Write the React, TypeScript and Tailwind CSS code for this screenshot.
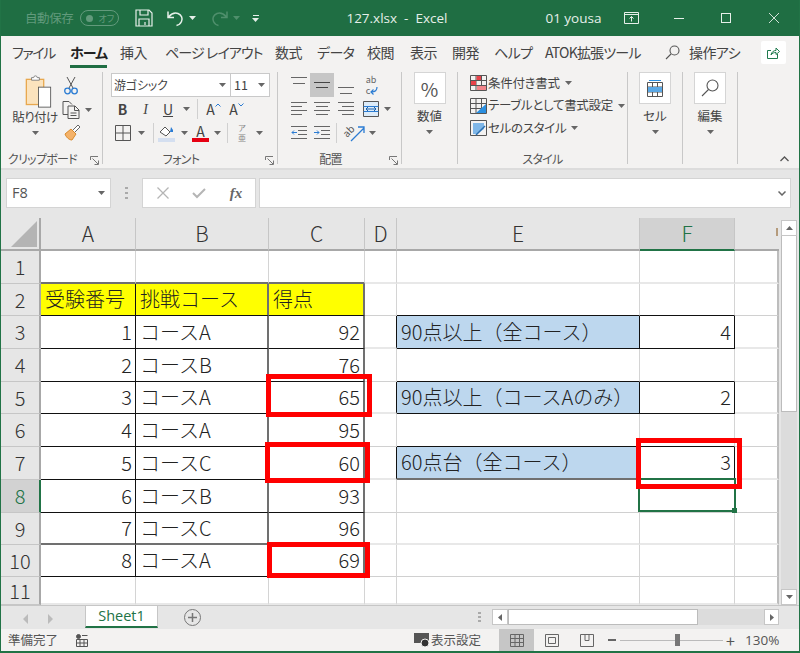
import type { ReactNode } from "react";

const colWidths = [95, 133, 96, 32, 243, 95, 44];
const rowHeights = [33, 32, 33, 33, 32, 33, 33, 33, 32, 32, 28];
const colNames = ["A", "B", "C", "D", "E", "F", ""];

type Cell = { text: string; right?: boolean; fill?: string };

// row number -> column index -> cell
const cells: Record<number, Record<number, Cell>> = {
  2: {
    0: { text: "受験番号", fill: "bg-[#ffff00]" },
    1: { text: "挑戦コース", fill: "bg-[#ffff00]" },
    2: { text: "得点", fill: "bg-[#ffff00]" },
  },
  3: {
    0: { text: "1", right: true },
    1: { text: "コースA" },
    2: { text: "92", right: true },
    4: { text: "90点以上（全コース）", fill: "bg-[#bdd7ee]" },
    5: { text: "4", right: true },
  },
  4: { 0: { text: "2", right: true }, 1: { text: "コースB" }, 2: { text: "76", right: true } },
  5: {
    0: { text: "3", right: true },
    1: { text: "コースA" },
    2: { text: "65", right: true },
    4: { text: "90点以上（コースAのみ）", fill: "bg-[#bdd7ee]" },
    5: { text: "2", right: true },
  },
  6: { 0: { text: "4", right: true }, 1: { text: "コースA" }, 2: { text: "95", right: true } },
  7: {
    0: { text: "5", right: true },
    1: { text: "コースC" },
    2: { text: "60", right: true },
    4: { text: "60点台（全コース）", fill: "bg-[#bdd7ee]" },
    5: { text: "3", right: true },
  },
  8: { 0: { text: "6", right: true }, 1: { text: "コースB" }, 2: { text: "93", right: true } },
  9: { 0: { text: "7", right: true }, 1: { text: "コースC" }, 2: { text: "96", right: true } },
  10: { 0: { text: "8", right: true }, 1: { text: "コースA" }, 2: { text: "69", right: true } },
};

const isBordered = (r: number, c: number) =>
  (c <= 2 && c >= 0 && r >= 2 && r <= 10) || ((c === 4 || c === 5) && (r === 3 || r === 5 || r === 7));

// the screenshot was scaled, so gridlines alternate between thin and soft double ones
function cellBorders(n: number, c: number) {
  const edgeR = isBordered(n, c) || isBordered(n, c + 1);
  const edgeB = isBordered(n, c) || isBordered(n + 1, c);
  let right = "border-r border-r-[#d4d4d4]";
  if (c === 6) right = "border-r-2 border-r-[#bdbdbd]";
  else if (edgeR && (c === 1 || c === 2) && n >= 2 && n <= 10) right = "border-r-2 border-r-[#707070]";
  else if (edgeR) right = "border-r border-r-[#111]";
  let bottom = n % 2 === 1 ? "border-b-2 border-b-[#e8e8e8]" : "border-b border-b-[#d0d0d0]";
  if (edgeB) {
    bottom = n === 1 || n === 9 || (n === 7 && c >= 3) ? "border-b-2 border-b-[#707070]" : "border-b border-b-[#111]";
  }
  return `${right} ${bottom}`;
}

function Caret({ className = "text-[#666]" }: { className?: string }) {
  return (
    <svg width="7" height="4" viewBox="0 0 7 4" className={className}>
      <path d="M0 0h7L3.5 4z" fill="currentColor" />
    </svg>
  );
}

function Launcher() {
  return (
    <svg width="9" height="9" viewBox="0 0 9 9" className="text-[#777]">
      <path d="M.5 4V.5H8M8.5 8.5H4.5M8.5 8.5V4.5M2.5 2.5l5.5 5.5" fill="none" stroke="currentColor" />
    </svg>
  );
}

function Slot({ w, children, className = "" }: { w: string; children?: ReactNode; className?: string }) {
  return <div className={`flex h-full shrink-0 items-center justify-center ${w} ${className}`}>{children}</div>;
}

function Lines({ ys, mode = "c", color = "#666" }: { ys: number[]; mode?: "c" | "l" | "r"; color?: string }) {
  return (
    <svg width="16" height="20" viewBox="0 0 16 20">
      {ys.map((y, i) => {
        const short = mode !== "c" && i % 2 === 1;
        const inset = mode === "c" && i % 2 === 1 ? 2 : 0;
        const x1 = short && mode === "r" ? 4 : inset;
        const x2 = short && mode === "l" ? 11 : 16 - inset;
        return <path key={y} d={`M${x1} ${y}.5H${x2}`} stroke={color} />;
      })}
    </svg>
  );
}

function Group({ w, label, launcher, children }: { w: string; label: string; launcher?: boolean; children: ReactNode }) {
  return (
    <section className={`my-[4px] flex shrink-0 flex-col border-r border-[#c8c8c8] ${w}`}>
      <div className="min-h-0 flex-1">{children}</div>
      <div
        className={`relative flex h-[10px] items-center justify-center whitespace-nowrap text-[12px] leading-none tracking-[-0.7px] text-[#555] ${
          launcher ? "pr-[18px]" : ""
        }`}
      >
        {label}
        {launcher && (
          <span className="absolute right-[3px] top-[2px] flex">
            <Launcher />
          </span>
        )}
      </div>
    </section>
  );
}

function BigButton({ label, children }: { label: string; children: ReactNode }) {
  return (
    <div className="flex flex-col items-center">
      <div className="flex h-[32px] w-[32px] items-center justify-center border border-[#d5d5d5] bg-white">{children}</div>
      <div className="mt-[3px] text-[12.5px] leading-[18px] text-[#444]">{label}</div>
      <div className="mt-[5px] flex">
        <Caret />
      </div>
    </div>
  );
}

function StyleRow({ label, icon }: { label: string; icon: ReactNode }) {
  return (
    <div className="flex h-[22.5px] items-center">
      <span className="ml-[11px] flex w-[18px] justify-center">{icon}</span>
      <span className="ml-[1px] whitespace-nowrap text-[12.5px] tracking-[-0.3px] text-[#444]">{label}</span>
      <span className="ml-[5px] flex">
        <Caret />
      </span>
    </div>
  );
}

function TitleBar() {
  return (
    <header className="flex h-[36px] shrink-0 items-center bg-[#1f6e43] text-[#e6efe9]">
      <span className="ml-[24px] text-[12.5px] tracking-[-0.4px] text-[#629a7c]">自動保存</span>
      <span className="ml-[7px] flex h-[16px] w-[39px] items-center rounded-full border border-[#629a7c] pl-[5px] text-[9px] text-[#629a7c]">
        <span className="h-[7px] w-[7px] rounded-full bg-[#629a7c]" />
        <span className="ml-[5px] leading-none">オフ</span>
      </span>
      <svg width="18" height="18" viewBox="0 0 18 18" className="ml-[16px]" fill="none" stroke="#e6efe9" strokeWidth="1.2">
        <path d="M1 1h13l3 3v13H1zM5 1v5h8V1M4 17v-7h10v7M10 13v3" />
      </svg>
      <svg width="17" height="17" viewBox="0 0 17 17" className="ml-[14px]" fill="none" stroke="#e6efe9" strokeWidth="1.5">
        <path d="M1 1.500v6h6M1.500 7C5 3 8 2.500 11 3.500c3.500 1.300 5 5 3.500 8-1 2-2.500 3.500-5 4" />
      </svg>
      <span className="ml-[5px] flex">
        <Caret className="text-[#e6efe9]" />
      </span>
      <svg width="17" height="17" viewBox="0 0 17 17" className="ml-[15px]" fill="none" stroke="#4f8f6c" strokeWidth="1.5">
        <path d="M16 1.500v6h-6M15.500 7C12 3 9 2.500 6 3.500c-3.500 1.300-5 5-3.500 8 1 2 2.500 3.500 5 4" />
      </svg>
      <span className="ml-[5px] flex">
        <Caret className="text-[#4f8f6c]" />
      </span>
      <span className="ml-[12px] flex flex-col items-center gap-[2px]">
        <span className="h-px w-[6px] bg-[#e6efe9]" />
        <Caret className="text-[#e6efe9]" />
      </span>
      <span className="ml-[87px] w-[103px] shrink-0 whitespace-pre font-['Open_Sans','Noto_Sans_CJK_JP',sans-serif] text-[13.5px]">
        127.xlsx  -  Excel
      </span>
      <span className="ml-[96px] w-[54px] shrink-0 whitespace-nowrap font-['Open_Sans',sans-serif] text-[13.5px]">01 yousa</span>
      <svg width="15" height="12" viewBox="0 0 15 12" className="ml-[25px]" fill="none" stroke="#e6efe9">
        <path d="M.5.5h14v11H.5zM.5 2.500h14M7.500 9.500v-5M5.500 6.500l2-2 2 2" />
      </svg>
      <span className="ml-[35px] h-px w-[10px] bg-[#e6efe9]" />
      <span className="ml-[37px] h-[10px] w-[10px] border border-[#e6efe9]" />
      <svg width="10" height="10" viewBox="0 0 10 10" className="ml-[38px]" stroke="#e6efe9" strokeWidth="0.9">
        <path d="M0 0l10 10M10 0L0 10" />
      </svg>
    </header>
  );
}

function TabRow() {
  return (
    <nav className="flex h-[32px] shrink-0 items-center whitespace-pre text-[14px] tracking-[-0.6px] text-[#444]">
      <span className="ml-[11px] w-[38px] shrink-0 tracking-[-1.4px]">ファイル</span>
      <span className="relative ml-[20px] w-[37px] shrink-0 font-bold tracking-[-1px] text-[#222]">
        ホーム
        <span className="absolute inset-x-0 top-[23px] h-[3px] bg-[#1f6e43]" />
      </span>
      <span className="ml-[13px] w-[28px] shrink-0">挿入</span>
      <span className="ml-[17px] w-[93px] shrink-0 tracking-[-0.9px]">ページ レイアウト</span>
      <span className="ml-[17px] w-[27px] shrink-0">数式</span>
      <span className="ml-[15px] w-[34px] shrink-0">データ</span>
      <span className="ml-[16px] w-[28px] shrink-0">校閲</span>
      <span className="ml-[15px] w-[27px] shrink-0">表示</span>
      <span className="ml-[15px] w-[27px] shrink-0">開発</span>
      <span className="ml-[15px] w-[33px] shrink-0">ヘルプ</span>
      <span className="ml-[18px] w-[100px] shrink-0 tracking-[-0.8px]">ATOK拡張ツール</span>
      <svg width="15" height="15" viewBox="0 0 15 15" className="ml-[20px] shrink-0" fill="none" stroke="#555" strokeWidth="1.1">
        <circle cx="9.500" cy="5.500" r="4.500" />
        <path d="M6 9l-5 5" />
      </svg>
      <span className="ml-[9px] w-[51px] shrink-0">操作アシ</span>
      <div className="ml-[21px] flex h-[23px] w-[25px] shrink-0 items-center justify-center rounded-[2px] bg-white">
        <svg width="13" height="13" viewBox="0 0 13 13" fill="none" stroke="#1f7a4d">
          <path d="M4 4.500H.5v8h10V8M4 9c.5-3 2.500-4.500 5-4.500V2l3.500 3.500L9 8.500V6.500C7 6.500 5 7 4 9z" />
        </svg>
      </div>
    </nav>
  );
}

function Ribbon() {
  return (
    <div className="flex h-[102px] shrink-0 border-b-2 border-[#dcdcdc] bg-[#f3f2f1] text-[#444]">
      <Group w="w-[102px]" label="クリップボード" launcher>
        <div className="flex h-full">
          <div className="ml-[5px] flex w-[58px] flex-col items-center pt-[3px]">
            <svg width="27" height="33" viewBox="0 0 30 38" className="ml-[6px] shrink-0" fill="none">
              <rect x="1" y="5" width="20" height="29" fill="#fbe3bd" stroke="#e8a84f" strokeWidth="1.500" />
              <path d="M7 6V3h2.500a2 2 0 0 1 4 0H16v3z" fill="#fff" stroke="#777" />
              <rect x="15" y="14" width="14" height="23" fill="#fff" stroke="#555" />
            </svg>
            <span className="whitespace-nowrap text-[12.5px] leading-[18px] tracking-[-0.5px]">貼り付け</span>
            <span className="mt-[5px] flex">
              <Caret />
            </span>
          </div>
          <div className="flex flex-col pt-[5px]">
            <svg width="14" height="18" viewBox="0 0 14 18" fill="none">
              <path d="M3 0l6 11M11 0L5 11" stroke="#555" />
              <circle cx="3.500" cy="14" r="2.800" stroke="#2b7cd3" strokeWidth="1.300" />
              <circle cx="10.500" cy="14" r="2.800" stroke="#2b7cd3" strokeWidth="1.300" />
            </svg>
            <div className="-ml-[2px] mt-[6px] flex items-center">
              <svg width="18" height="18" viewBox="0 0 18 18" fill="none" stroke="#555">
                <path d="M6 13.500H1V.5h6l3 3M6 5h7l4 4v8.500H6zM12.500 5v4.500H17M8.500 12h6M8.500 14.500h6" />
              </svg>
              <span className="ml-[5px] flex">
                <Caret />
              </span>
            </div>
            <svg width="17" height="17" viewBox="0 0 17 17" className="mt-[5px]" fill="none">
              <path d="M1 10l6-5 5 5-4 6c-3 0-6-3-7-6z" fill="#f4b269" stroke="#d98a2b" />
              <path d="M9 6l5-5 2 2-5 5" fill="#fff" stroke="#666" />
            </svg>
          </div>
        </div>
      </Group>

      <Group w="w-[175px]" label="フォント" launcher>
        <div className="flex h-full flex-col pl-[8px] pt-[1px]">
          <div className="flex h-[24px] w-[159px] shrink-0 border border-[#c9c9c9] bg-white text-[12px]">
            <span className="flex w-[119px] items-center justify-between border-r border-[#c9c9c9] pl-[2px] pr-[4px] tracking-[-0.2px]">
              游ゴシック
              <Caret />
            </span>
            <span className="flex flex-1 items-center justify-between pl-[3px] pr-[4px] text-[12.5px]">
              11
              <Caret />
            </span>
          </div>
          <div className="flex h-[24px] shrink-0 items-center text-[14px]">
            <Slot w="w-[23px]" className="font-bold">B</Slot>
            <Slot w="w-[23px]" className="font-['Liberation_Serif',serif] italic">I</Slot>
            <Slot w="w-[22px]" className="underline">U</Slot>
            <Slot w="w-[14px]"><Caret /></Slot>
            <span className="ml-[4px] h-[20px] w-px bg-[#d0d0d0]" />
            <Slot w="w-[31px]">
              A
              <svg width="6" height="4" viewBox="0 0 6 4" className="mb-[8px]" fill="none" stroke="#2b7cd3">
                <path d="M.5 3.500L3 1l2.500 2.500" />
              </svg>
            </Slot>
            <Slot w="w-[15px]">
              A
              <svg width="6" height="4" viewBox="0 0 6 4" className="mb-[8px] shrink-0" fill="none" stroke="#2b7cd3">
                <path d="M.5.5L3 3 5.500.5" />
              </svg>
            </Slot>
          </div>
          <div className="flex h-[24px] shrink-0 items-center">
            <Slot w="w-[23px]">
              <svg width="16" height="16" viewBox="0 0 16 16" fill="none" stroke="#555">
                <path d="M.5.5h15v15H.5zM8 .5v15M.5 8h15" />
              </svg>
            </Slot>
            <Slot w="w-[14px]"><Caret /></Slot>
            <span className="ml-[5px] h-[20px] w-px bg-[#d0d0d0]" />
            <Slot w="w-[25px]">
              <svg width="17" height="18" viewBox="0 0 17 18" fill="none">
                <path d="M2 8l5-5 5 5-4 4z" fill="#fff" stroke="#555" />
                <path d="M13 3l2 3v2h-3z" fill="#2b7cd3" />
                <rect y="14" width="17" height="4" fill="#d4dff0" />
              </svg>
            </Slot>
            <Slot w="w-[10px]"><Caret /></Slot>
            <Slot w="w-[23px]">
              <div className="flex flex-col items-center text-[14px] leading-[14px]">
                A<span className="h-[4px] w-[17px] bg-[#e60012]" />
              </div>
            </Slot>
            <Slot w="w-[10px]"><Caret /></Slot>
            <span className="ml-[5px] h-[20px] w-px bg-[#d0d0d0]" />
            <Slot w="w-[28px]">
              <span className="flex flex-col items-center text-[8px] leading-[10px] text-[#888]">
                <span>ア</span>
                <span>亜</span>
              </span>
            </Slot>
            <Slot w="w-[7px]"><Caret /></Slot>
          </div>
        </div>
      </Group>

      <Group w="w-[124px]" label="配置" launcher>
        <div className="flex h-full flex-col pl-[9px] pt-[1px]">
          <div className="flex h-[24px] shrink-0">
            <Slot w="w-[23px]"><Lines ys={[2, 8]} /></Slot>
            <Slot w="w-[24px]" className="bg-[#c6c6c6]"><Lines ys={[7, 12]} color="#444" /></Slot>
            <Slot w="w-[24px]"><Lines ys={[12, 18]} /></Slot>
            <Slot w="w-[28px]">
              <span className="flex flex-col text-[9px] leading-[11px] text-[#666]">
                <span>ab</span>
                <span className="flex items-center">
                  c
                  <svg width="8" height="8" viewBox="0 0 8 8" fill="none" stroke="#2b7cd3" strokeWidth="1.200">
                    <path d="M7 0c0 4-2 5-5.500 5M3.500 2.500L1 5l2.500 2.500" />
                  </svg>
                </span>
              </span>
            </Slot>
          </div>
          <div className="flex h-[24px] shrink-0">
            <Slot w="w-[23px]"><Lines ys={[3, 7, 11, 15]} mode="l" /></Slot>
            <Slot w="w-[24px]"><Lines ys={[3, 7, 11, 15]} /></Slot>
            <Slot w="w-[24px]"><Lines ys={[3, 7, 11, 15]} mode="r" /></Slot>
            <Slot w="w-[26px]">
              <svg width="16" height="16" viewBox="0 0 16 16" fill="none">
                <path d="M.5.5h15v15H.5z" fill="#dcebf8" stroke="#555" />
                <path d="M.5 5.500h15M.5 10.500h15" stroke="#2b7cd3" />
                <path d="M3 8h10M5 6L3 8l2 2M11 6l2 2-2 2" stroke="#1a5fa8" />
              </svg>
            </Slot>
            <Slot w="w-[7px]"><Caret /></Slot>
          </div>
          <div className="flex h-[24px] shrink-0">
            <Slot w="w-[23px]">
              <svg width="16" height="14" viewBox="0 0 16 14" fill="none">
                <path d="M0 .5h16M7 4.500h9M7 8.500h9M0 12.500h16" stroke="#666" />
                <path d="M6 6.500H1M3 4.500l-2 2 2 2" stroke="#2b7cd3" />
              </svg>
            </Slot>
            <Slot w="w-[24px]">
              <svg width="16" height="14" viewBox="0 0 16 14" fill="none">
                <path d="M0 .5h16M7 4.500h9M7 8.500h9M0 12.500h16" stroke="#666" />
                <path d="M0 6.500h5M3 4.500l2 2-2 2" stroke="#2b7cd3" />
              </svg>
            </Slot>
            <span className="ml-[2px] h-[20px] w-px self-center bg-[#d0d0d0]" />
            <Slot w="w-[26px]" className="ml-[6px]">
              <svg width="24" height="20" viewBox="0 0 24 20" fill="none" className="overflow-visible">
                <text x="3" y="15" fontSize="10" fill="#555" transform="rotate(-45 3 15)">ab</text>
                <path d="M7 18L20 5M14 4h6v6" stroke="#2b7cd3" strokeWidth="1.300" />
              </svg>
            </Slot>
            <Slot w="w-[7px]"><Caret /></Slot>
          </div>
        </div>
      </Group>

      <Group w="w-[56px]" label="">
        <div className="flex justify-center">
          <BigButton label="数値">
            <span className="text-[19px] leading-none text-[#555]">%</span>
          </BigButton>
        </div>
      </Group>

      <Group w="w-[170px]" label="スタイル">
        <div className="flex h-full flex-col">
          <StyleRow
            label="条件付き書式"
            icon={
              <svg width="17" height="16" viewBox="0 0 17 16" fill="none" stroke="#555">
                <path d="M.5.5h16v15H.5zM6 .5v15M11.500 .5v15M.5 5.500h16M.5 10.500h16" />
                <rect x="6.500" y="1" width="4.500" height="4" fill="#e8424a" stroke="none" />
                <rect x="1" y="6" width="5" height="4" fill="#e8424a" stroke="none" />
                <rect x="7" y="11" width="9" height="4" fill="#f2868b" stroke="none" />
              </svg>
            }
          />
          <StyleRow
            label="テーブルとして書式設定"
            icon={
              <svg width="17" height="16" viewBox="0 0 17 16" fill="none" stroke="#555">
                <path d="M.5.5h16v15H.5zM6 .5v15M11.500 .5v15M.5 5.500h16M.5 10.500h16" />
                <path d="M6 15L16 6v9z" fill="#2b8fe0" stroke="none" />
              </svg>
            }
          />
          <StyleRow
            label="セルのスタイル"
            icon={
              <svg width="17" height="16" viewBox="0 0 17 16" fill="none" stroke="#555">
                <path d="M.5.5h16v15H.5z" />
                <path d="M3 3h11v6L7 14H3z" fill="#7fb7e8" stroke="none" />
                <path d="M6 15l9-9" stroke="#2b6fb0" strokeWidth="1.500" />
              </svg>
            }
          />
        </div>
      </Group>

      <Group w="w-[55px]" label="">
        <div className="flex justify-center">
          <BigButton label="セル">
            <svg width="16" height="17" viewBox="0 0 16 17" fill="none" stroke="#555">
              <path d="M.5 2.500h15v14H.5zM5.500 2.500v14M10.500 2.500v14M.5 7h15M.5 12h15" />
              <rect x="1" y="7" width="14" height="5" fill="#5ba8e5" stroke="none" />
              <path d="M2 .5h12" stroke="#2b8fe0" />
            </svg>
          </BigButton>
        </div>
      </Group>

      <Group w="w-[55px]" label="">
        <div className="flex justify-center">
          <BigButton label="編集">
            <svg width="18" height="18" viewBox="0 0 18 18" fill="none" stroke="#555" strokeWidth="1.100">
              <circle cx="11.500" cy="6.500" r="5.500" />
              <path d="M7.500 10.500L1 17" />
            </svg>
          </BigButton>
        </div>
      </Group>

      <div className="flex flex-1 items-end justify-end pb-[6px] pr-[10px]">
        <svg width="9" height="6" viewBox="0 0 9 6" fill="none" stroke="#555" strokeWidth="1.300">
          <path d="M.5 5L4.500 1l4 4" />
        </svg>
      </div>
    </div>
  );
}

function FormulaBar() {
  return (
    <div className="flex h-[48px] shrink-0 items-start bg-[#e6e6e6] pt-[8px]">
      <div className="ml-[5px] flex h-[30px] w-[105px] items-center justify-between border border-[#d4d4d4] bg-white pl-[5px] pr-[5px] font-['Open_Sans',sans-serif] text-[14.5px] text-[#555]">
        F8
        <Caret />
      </div>
      <div className="ml-[14px] mt-[9px] flex flex-col gap-[3px]">
        <span className="h-[2px] w-[3px] bg-[#aaa]" />
        <span className="h-[2px] w-[3px] bg-[#aaa]" />
        <span className="h-[2px] w-[3px] bg-[#aaa]" />
      </div>
      <div className="ml-[14px] flex h-[30px] w-[114px] items-center border border-[#d4d4d4] bg-white">
        <Slot w="w-[37px]" className="pl-[2px]">
          <svg width="12" height="12" viewBox="0 0 12 12" stroke="#b5b5b5" strokeWidth="1.300">
            <path d="M.5.5l11 11M11.500 .5l-11 11" />
          </svg>
        </Slot>
        <Slot w="w-[38px]">
          <svg width="14" height="11" viewBox="0 0 14 11" fill="none" stroke="#b5b5b5" strokeWidth="2">
            <path d="M1 5l4 4 8-8" />
          </svg>
        </Slot>
        <Slot w="w-[36px]" className="font-['Liberation_Serif',serif] text-[15px] font-bold italic text-[#666]">
          fx
        </Slot>
      </div>
      <div className="ml-[3px] flex h-[30px] w-[532px] items-center justify-end border border-[#d4d4d4] bg-white pr-[4px]">
        <svg width="8" height="5" viewBox="0 0 8 5" fill="none" stroke="#666" strokeWidth="1.500">
          <path d="M.5.5L4 4 7.500.5" />
        </svg>
      </div>
    </div>
  );
}

function Sheet() {
  const rows = rowHeights.map((h, i) => ({ n: i + 1, h }));
  return (
    <div className="relative flex h-[387px] shrink-0 bg-[#e6e6e6] [font-feature-settings:normal]">
      <div className="w-[778px] shrink-0">
        <div className="grid grid-cols-[40px_95px_133px_96px_32px_243px_95px_44px] grid-rows-[33px_repeat(11,auto)]">
          <div className="flex items-end justify-end border-b-2 border-r-2 border-[#a8a8a8] bg-[#e6e6e6] pb-[2px] pr-[2px]">
            <span className="h-0 w-0 border-b-[26px] border-l-[26px] border-b-[#b4b4b4] border-l-transparent" />
          </div>
          {colNames.map((c, i) =>
            c === "" ? (
              <div key="end" className="relative border-b-2 border-[#a8a8a8] bg-[#e6e6e6]">
                <span className="absolute right-[1px] top-[10px] h-[8px] w-[2px] bg-[#b59b7c]" />
              </div>
            ) : (
              <div
                key={c}
                style={{ width: colWidths[i] }}
                className={
                  c === "F"
                    ? "flex items-center justify-center border-b-2 border-r border-b-[#217346] border-r-[#c6c6c6] bg-[#d2d2d2] text-[21px] font-light text-[#217346]"
                    : "flex items-center justify-center border-b-2 border-r border-b-[#a8a8a8] border-r-[#c6c6c6] text-[21px] font-light text-[#333]"
                }
              >
                {c}
              </div>
            ),
          )}
          {rows.map(({ n, h }) => (
            <div key={n} className="contents">
              <div
                style={{ height: h }}
                className={
                  n === 8
                    ? "flex items-center justify-center border-b border-r-2 border-b-[#c6c6c6] border-r-[#217346] bg-[#d2d2d2] text-[20px] font-light text-[#217346]"
                    : "flex items-center justify-center border-b border-r-2 border-b-[#c6c6c6] border-r-[#a8a8a8] text-[20px] font-light text-[#333]"
                }
              >
                {n}
              </div>
              {colWidths.map((_, c) => {
                const cell = cells[n]?.[c];
                return (
                  <div
                    key={c}
                    style={{ height: h }}
                    className={`flex items-center whitespace-nowrap pb-[1px] text-[20px] font-light text-[#222] ${cellBorders(n, c)} ${
                      cell?.fill ?? "bg-white"
                    } ${cell?.right ? "justify-end pr-[3px]" : "pl-[4px]"}`}
                  >
                    {cell?.text}
                  </div>
                );
              })}
            </div>
          ))}
        </div>
      </div>

      {/* scrollbar */}
      <div className="ml-[2px] flex w-[16px] flex-col pt-[2px]">
        <div className="flex h-full flex-col bg-[#dcdcdc]">
          <div className="flex h-[16px] shrink-0 items-center justify-center border border-[#c6c6c6] bg-white">
            <Caret className="rotate-180 text-[#666]" />
          </div>
          <div className="h-[176px] shrink-0 border border-t-0 border-[#bcbcbc] bg-white" />
          <div className="flex-1" />
          <div className="flex h-[16px] shrink-0 items-center justify-center border border-[#c6c6c6] bg-white">
            <Caret />
          </div>
        </div>
      </div>

      {/* selection and the red marks drawn on top of the sheet */}
      <div className="absolute left-[637px] top-[260px] h-[34px] w-[98px] border-2 border-[#217346]">
        <span className="absolute -bottom-[3px] -right-[3px] h-[5px] w-[5px] bg-[#217346]" />
      </div>
      <div className="absolute left-[265px] top-[156px] h-[43px] w-[106px] border-[5px] border-[#ff0000]" />
      <div className="absolute left-[264px] top-[224px] h-[41px] w-[105px] border-[5px] border-[#ff0000]" />
      <div className="absolute left-[266px] top-[324px] h-[36px] w-[103px] border-[5px] border-[#ff0000]" />
      <div className="absolute left-[635px] top-[220px] h-[51px] w-[106px] border-[5px] border-[#ff0000]" />
    </div>
  );
}

function SheetTabs() {
  return (
    <div className="flex h-[24px] shrink-0 items-start border-t border-[#c6c6c6] bg-[#e6e6e6]">
      <svg width="30" height="10" viewBox="0 0 30 10" className="ml-[22px] mt-[8px]" fill="#bbb">
        <path d="M5 0v10L0 5zM25 0l5 5-5 5z" />
      </svg>
      <div className="ml-[32px] flex h-[22px] w-[73px] items-center justify-center border-x border-b-2 border-x-[#c6c6c6] border-b-[#217346] bg-white font-['Open_Sans',sans-serif] text-[14.5px] text-[#217346]">
        Sheet1
      </div>
      <svg width="17" height="17" viewBox="0 0 17 17" className="ml-[26px] mt-[3px]" fill="none" stroke="#777">
        <circle cx="8.500" cy="8.500" r="8" />
        <path d="M8.500 4v9M4 8.500h9" strokeWidth="1.500" />
      </svg>
      <div className="ml-[277px] mt-[6px] flex flex-col gap-[2px]">
        <span className="h-[2px] w-[3px] bg-[#aaa]" />
        <span className="h-[2px] w-[3px] bg-[#aaa]" />
        <span className="h-[2px] w-[3px] bg-[#aaa]" />
      </div>
      <div className="ml-[11px] mt-[3px] flex h-[16px] w-[287px] bg-[#dcdcdc]">
        <div className="flex w-[16px] items-center justify-center border border-[#c6c6c6] bg-white">
          <svg width="4" height="7" viewBox="0 0 4 7" fill="#666">
            <path d="M4 0v7L0 3.500z" />
          </svg>
        </div>
        <div className="w-[190px] border border-[#bcbcbc] bg-white" />
        <div className="flex-1" />
        <div className="flex w-[15px] items-center justify-center border border-[#c6c6c6] bg-white">
          <svg width="4" height="7" viewBox="0 0 4 7" fill="#666">
            <path d="M0 0l4 3.500L0 7z" />
          </svg>
        </div>
      </div>
    </div>
  );
}

function StatusBar() {
  return (
    <footer className="flex h-[22px] shrink-0 items-center whitespace-nowrap bg-[#f3f2f1] text-[12.5px] text-[#555]">
      <span className="ml-[7px] w-[50px] shrink-0">準備完了</span>
      <svg width="12" height="13" viewBox="0 0 12 13" className="ml-[18px] shrink-0" fill="none" stroke="#555">
        <circle cx="2.500" cy="2.500" r="2" fill="#555" />
        <path d="M.5 5.500h11v7H.5zM4 5.500v7M8 5.500v7M.5 9h11M6 1.500h5.500" />
      </svg>
      <svg width="17" height="16" viewBox="0 0 17 16" className="ml-[326px] shrink-0">
        <rect x="0" y="1" width="15" height="10" fill="#555" />
        <circle cx="11" cy="11" r="4" fill="#333" stroke="#f3f2f1" />
      </svg>
      <span className="w-[50px] shrink-0">表示設定</span>
      <Slot w="w-[35px]" className="ml-[18px] bg-[#c6c6c6]">
        <svg width="14" height="13" viewBox="0 0 14 13" fill="none" stroke="#666">
          <path d="M.5.5h13v12H.5zM5 .5v12M9.500 .5v12M.5 4.500h13M.5 8.500h13" />
        </svg>
      </Slot>
      <Slot w="w-[35px]">
        <svg width="14" height="13" viewBox="0 0 14 13" fill="none" stroke="#666">
          <path d="M.5.5h13v12H.5zM3.500 3.500h7v6h-7z" />
        </svg>
      </Slot>
      <Slot w="w-[35px]">
        <svg width="14" height="13" viewBox="0 0 14 13" fill="none" stroke="#666">
          <path d="M.5.5h13v12H.5zM5 .5v6h4v-6" />
        </svg>
      </Slot>
      <span className="ml-[4px] h-[2px] w-[8px] shrink-0 bg-[#666]" />
      <div className="relative ml-[4px] h-px w-[103px] shrink-0 bg-[#bbb]">
        <span className="absolute -top-[6px] left-[55px] h-[12px] w-[5px] bg-[#777]" />
      </div>
      <span className="ml-[3px] w-[9px] shrink-0 text-[16px] leading-none text-[#555]">+</span>
      <span className="ml-[10px] shrink-0 font-['Open_Sans',sans-serif] text-[13.5px]">130%</span>
    </footer>
  );
}

export default function App() {
  return (
    <div className="flex h-[653px] w-[800px] flex-col overflow-hidden border-x border-b-2 border-x-[#217346] border-b-[#217346] bg-[#f3f2f1] font-['Noto_Sans_CJK_JP',sans-serif] [font-feature-settings:'palt']">
      <TitleBar />
      <TabRow />
      <Ribbon />
      <FormulaBar />
      <Sheet />
      <SheetTabs />
      <StatusBar />
    </div>
  );
}
